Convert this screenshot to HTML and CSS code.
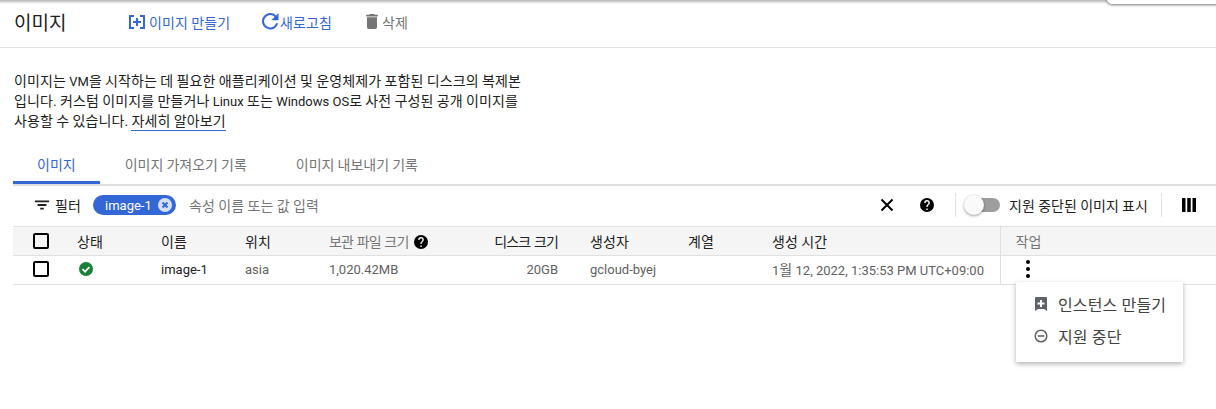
FILE: index.html
```html
<!DOCTYPE html>
<html>
<head>
  <title>이미지</title>
  <link rel="stylesheet" href="styles.css">
</head>
<body>
  <div class="top-notch"></div>

  <header class="page-header">
    <h1 class="page-title">이미지</h1>
    <a class="action action-create">
      <svg class="icon-create" viewBox="0 0 16 16"><path fill="#3367d6" d="M0 1h5v2H2v10h3v2H0zM16 1h-5v2h3v10h-3v2h5zM7 4h2v3h3v2H9v3H7V9H4V7h3z"/></svg>
      <span class="ko">이미지 만들기</span>
    </a>
    <a class="action action-refresh">
      <svg class="icon-refresh" viewBox="4 4 16.500 16.500"><path fill="#3367d6" d="M17.650 6.350A7.950 7.950 0 0 0 12 4a8 8 0 1 0 7.730 10h-2.080A6 6 0 1 1 12 6c1.660 0 3.140.69 4.220 1.780L13 11h7V4z"/></svg>
      <span class="ko">새로고침</span>
    </a>
    <a class="action action-delete">
      <svg class="icon-delete" viewBox="5 3 14 18"><path fill="#757575" d="M6 19c0 1.100.9 2 2 2h8c1.100 0 2-.9 2-2V7H6zM19 4h-3.500l-1-1h-5l-1 1H5v2h14z"/></svg>
      <span class="ko">삭제</span>
    </a>
  </header>

  <p class="intro ko">이미지는 <span class="en">VM</span>을 시작하는 데 필요한 애플리케이션 및 운영체제가 포함된 디스크의 복제본<br>입니다. 커스텀 이미지를 만들거나 <span class="en">Linux</span> 또는 <span class="en">Windows OS</span>로 사전 구성된 공개 이미지를<br>사용할 수 있습니다. <a class="learn-more">자세히 알아보기</a></p>

  <nav class="tabs">
    <a class="tab tab-active ko">이미지</a>
    <a class="tab ko">이미지 가져오기 기록</a>
    <a class="tab ko">이미지 내보내기 기록</a>
  </nav>

  <div class="filter-bar">
    <svg class="filter-icon" viewBox="0 0 18 18"><path fill="#212121" d="M1 4h16v2H1zM4 8h10v2H4zM7 12h4v2H7z"/></svg>
    <span class="filter-label ko">필터</span>
    <span class="chip">image-1
      <svg class="chip-x" viewBox="0 0 14 14"><circle cx="7" cy="7" r="7" fill="#d5e0f7"/><path stroke="#3367d6" stroke-width="2" d="M4.500 4.500l5 5M9.500 4.500l-5 5"/></svg>
    </span>
    <span class="filter-hint ko">속성 이름 또는 값 입력</span>

    <svg class="clear-icon" viewBox="0 0 14 14"><path stroke="#000" stroke-width="2" d="M1.500 1.500l11 11M12.500 1.500l-11 11"/></svg>
    <svg class="help-icon" viewBox="2 2 20 20"><path fill="#000" d="M12 2a10 10 0 1 0 0 20 10 10 0 0 0 0-20zm1 17h-2v-2h2zm2.070-7.750-.9.920C13.450 12.900 13 13.500 13 15h-2v-.5c0-1.100.45-2.100 1.170-2.830l1.240-1.260A2 2 0 1 0 10 9H8a4 4 0 1 1 8 0c0 .88-.36 1.680-.93 2.250z"/></svg>
    <span class="bar-divider"></span>
    <span class="toggle"><span class="toggle-track"></span><span class="toggle-knob"></span></span>
    <span class="toggle-label ko">지원 중단된 이미지 표시</span>
    <span class="bar-divider divider-end"></span>
    <svg class="columns-icon" viewBox="0 0 12 12"><path fill="#000" d="M0 0h3v12H0zM4.500 0h3v12h-3zM9 0h3v12H9z"/></svg>
  </div>

  <table class="images">
    <colgroup>
      <col class="col-check"><col class="col-std"><col class="col-std"><col class="col-std">
      <col class="col-archive"><col class="col-disk"><col class="col-creator"><col class="col-std">
      <col class="col-time"><col>
    </colgroup>
    <thead>
      <tr>
        <th class="check-cell"><span class="checkbox"></span></th>
        <th class="ko">상태</th>
        <th class="ko">이름</th>
        <th class="ko">위치</th>
        <th class="muted ko"><span class="tight">보관 파일 크기</span>
          <svg class="th-help" viewBox="2 2 20 20"><path fill="#000" d="M12 2a10 10 0 1 0 0 20 10 10 0 0 0 0-20zm1 17h-2v-2h2zm2.070-7.750-.9.920C13.450 12.900 13 13.500 13 15h-2v-.5c0-1.100.45-2.100 1.170-2.830l1.240-1.260A2 2 0 1 0 10 9H8a4 4 0 1 1 8 0c0 .88-.36 1.680-.93 2.250z"/></svg>
        </th>
        <th class="num ko"><span class="tight">디스크 크기</span></th>
        <th class="ko">생성자</th>
        <th class="ko">계열</th>
        <th class="ko">생성 시간</th>
        <th class="action-cell muted ko">작업</th>
      </tr>
    </thead>
    <tbody>
      <tr>
        <td class="check-cell"><span class="checkbox"></span></td>
        <td><svg class="status-ok" viewBox="0 0 14 14"><circle cx="7" cy="7" r="7" fill="#188038"/><path fill="none" stroke="#fff" stroke-width="1.800" d="M3.500 7.200l2.500 2.500 4.500-4.700"/></svg></td>
        <td class="dark">image-1</td>
        <td>asia</td>
        <td>1,020.42MB</td>
        <td class="num">20GB</td>
        <td>gcloud-byej</td>
        <td></td>
        <td>1<span class="ko">월</span> 12, 2022, 1:35:53 PM UTC+09:00</td>
        <td class="action-cell"><span class="kebab"><i></i><i></i><i></i></span></td>
      </tr>
    </tbody>
  </table>

  <div class="menu">
    <div class="menu-item">
      <svg class="menu-icon" viewBox="1 1 12 14"><path fill="#5f6368" d="M2 1h10a1 1 0 0 1 1 1v13l-3-2H4l-3 2V2a1 1 0 0 1 1-1zm4 3v2.500H3.500v2H6V11h2V8.500h2.500v-2H8V4z"/></svg>
      <span>인스턴스 만들기</span>
    </div>
    <div class="menu-item">
      <svg class="menu-icon" viewBox="0 0 14 14"><circle cx="7" cy="7" r="5.800" fill="none" stroke="#5f6368" stroke-width="1.500"/><path fill="#5f6368" d="M3.800 6.200h6.400v1.600H3.800z"/></svg>
      <span>지원 중단</span>
    </div>
  </div>
</body>
</html>
```

FILE: styles.css
```css
html, body {
  margin: 0;
  padding: 0;
}

body {
  position: relative;
  height: 409px;
  overflow: hidden;
  background: linear-gradient(#b5b5b5, #fff 4px);
  color: #212121;
  font-family: Roboto, "Noto Sans CJK KR", sans-serif;
  font-size: 13px;
}

/* hangul runs a size up so the widths come out like the original */
.ko {
  font-size: 14px;
  letter-spacing: 0.12px;
  word-spacing: -0.37px;
}

.en {
  font-size: 13px;
  line-height: 1;
  letter-spacing: 0;
  word-spacing: 0;
}

.tight {
  letter-spacing: -0.85px;
  word-spacing: 1px;
}

/* white tab of the panel above, pokes in at the top right */
.top-notch {
  position: absolute;
  top: -4px;
  left: 1107px;
  right: -4px;
  height: 8px;
  background-color: #fff;
  border-bottom-left-radius: 5px;
  box-shadow: 0 1px 3px rgba(0, 0, 0, 0.55);
}

.page-header {
  display: flex;
  align-items: center;
  box-sizing: border-box;
  height: 48px;
  padding: 0 0 4px 14px;
  border-bottom: 1px solid #e0e0e0;
}

.page-title {
  width: 115px;
  margin: 0;
  font-size: 19px;
  font-weight: 400;
  color: #202124;
}

.action {
  display: flex;
  align-items: center;
  color: #3367d6;
}

.icon-create {
  width: 16px;
  height: 16px;
}

.icon-refresh {
  width: 17px;
  height: 17px;
}

.icon-delete {
  width: 12px;
  height: 15px;
  margin-left: 1px;
}

.action-create {
  gap: 4px;
  width: 133px;
}

.action-refresh {
  gap: 1px;
  width: 103px;
}

.action-delete {
  gap: 4px;
  color: #757575;
}

.intro {
  margin: 23px 0 0 14px;
  line-height: 20px;
  color: #212121;
}

.learn-more {
  color: #212121;
  padding-bottom: 1px;
  border-bottom: 1px solid #3367d6;
}

.tabs {
  display: flex;
  gap: 1px;
  height: 34px;
  margin: 19px 0 0 13px;
  border-bottom: 2px solid #e0e0e0;
}

.tab {
  display: flex;
  align-items: center;
  padding: 0 24px 6px;
  height: 34px;
  color: #757575;
  letter-spacing: 0;
  box-sizing: border-box;
}

.tab-active {
  color: #3367d6;
  border-bottom: 3px solid #3367d6;
  padding-bottom: 3px;
}

.filter-bar {
  display: flex;
  align-items: center;
  height: 40px;
  margin: -1px 0 1px 13px;
}

.filter-icon {
  width: 16px;
  height: 16px;
  margin-left: 21px;
}

.filter-label {
  margin-left: 5px;
  width: 38px;
}

.chip {
  display: flex;
  align-items: center;
  justify-content: space-between;
  box-sizing: border-box;
  width: 83px;
  height: 20px;
  padding: 0 1px 0 12px;
  margin-right: 13px;
  border-radius: 10px;
  background-color: #3367d6;
  color: #fff;
}

.chip-x {
  width: 14px;
  height: 14px;
  margin-right: 3px;
}

.filter-hint {
  flex: 1;
  color: #757575;
}

.clear-icon {
  width: 14px;
  height: 14px;
  margin-right: 26px;
}

.help-icon {
  width: 14px;
  height: 14px;
  margin-right: 21px;
}

.bar-divider {
  width: 1px;
  height: 24px;
  background-color: #e0e0e0;
}

.toggle {
  position: relative;
  width: 36px;
  height: 20px;
  margin: 0 9px 0 8px;
}

.toggle-track {
  position: absolute;
  top: 3px;
  left: 2px;
  width: 34px;
  height: 14px;
  border-radius: 7px;
  background-color: #9e9e9e;
}

.toggle-knob {
  position: absolute;
  top: 0;
  left: 0;
  width: 20px;
  height: 20px;
  border-radius: 50%;
  background-color: #fafafa;
  box-shadow: 0 1px 3px rgba(0, 0, 0, 0.4);
}

.toggle-label {
  color: #212121;
  letter-spacing: 0.06px;
}

.divider-end {
  margin-left: 13px;
}

.columns-icon {
  width: 14px;
  height: 14px;
  margin: 0 20px 0 20px;
}

.images {
  width: 1203px;
  margin-left: 13px;
  border-collapse: collapse;
  table-layout: fixed;
}

.col-check { width: 64px; }
.col-std { width: 84px; }
.col-archive { width: 145px; }
.col-disk { width: 116px; }
.col-creator { width: 98px; }
.col-time { width: 228px; }

.images th,
.images td {
  padding: 0;
  text-align: left;
  font-weight: 400;
  white-space: nowrap;
  border-bottom: 1px solid #e0e0e0;
}

.images th {
  height: 27px;
  padding-bottom: 1px;
  background-color: #f5f5f5;
  border-top: 1px solid #e0e0e0;
  color: #212121;
}

.images td {
  height: 26px;
  padding-bottom: 2px;
  color: #616161;
}

.images th.muted {
  color: #757575;
}

.images .num {
  text-align: right;
  padding-right: 32px;
}

.images .dark {
  color: #212121;
}

.images .action-cell {
  padding-left: 15px;
  border-left: 1px solid #e0e0e0;
}

.check-cell {
  padding-left: 20px !important;
}

.checkbox {
  display: block;
  box-sizing: border-box;
  width: 16px;
  height: 16px;
  border: 2px solid #000;
  border-radius: 2px;
}

.th-help {
  width: 14px;
  height: 14px;
  margin-left: 2px;
  vertical-align: -2px;
}

.status-ok {
  display: block;
  width: 14px;
  height: 14px;
  margin-left: 2px;
}

.kebab {
  display: flex;
  flex-direction: column;
  gap: 3px;
  margin-left: 10px;
  width: 4px;
}

.kebab i {
  display: block;
  width: 4px;
  height: 4px;
  border-radius: 50%;
  background-color: #000;
}

.menu {
  position: absolute;
  top: 282px;
  left: 1016px;
  width: 167px;
  height: 80px;
  padding-top: 6px;
  box-sizing: border-box;
  background-color: #fff;
  box-shadow: 0 2px 5px rgba(0, 0, 0, 0.3);
}

.menu-item {
  display: flex;
  align-items: center;
  gap: 10px;
  height: 32px;
  padding-left: 18px;
  font-size: 16px;
  letter-spacing: 0.15px;
  color: #424242;
}

.menu-icon {
  width: 14px;
  height: 14px;
}
```
